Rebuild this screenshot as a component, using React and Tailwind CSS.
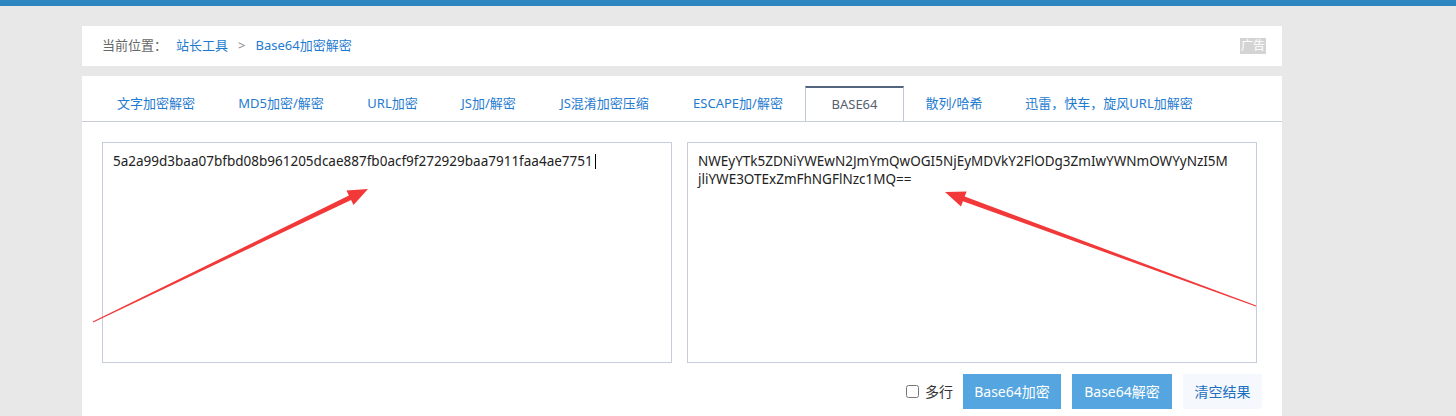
const tabs = [
  { label: "文字加密解密", w: "w-[120px]" },
  { label: "MD5加密/解密", w: "w-[130px]" },
  { label: "URL加密", w: "w-[93px]" },
  { label: "JS加/解密", w: "w-[99px]" },
  { label: "JS混淆加密压缩", w: "w-[133px]" },
  { label: "ESCAPE加/解密", w: "w-[134px]" },
  { label: "BASE64", w: "w-[99px]", active: true },
  { label: "散列/哈希", w: "w-[100px]" },
  { label: "迅雷，快车，旋风URL加解密", w: "w-[210px]" },
]

const source = "5a2a99d3baa07bfbd08b961205dcae887fb0acf9f272929baa7911faa4ae7751"
// wrapped where the reference box wraps it
const encoded = "NWEyYTk5ZDNiYWEwN2JmYmQwOGI5NjEyMDVkY2FlODg3ZmIwYWNmOWYyNzI5M\njliYWE3OTExZmFhNGFlNzc1MQ=="

function Arrows() {
  // red annotation arrows drawn over the screenshot
  return (
    <svg className="absolute left-0 top-0 pointer-events-none" width="1456" height="416">
      <polygon
        fill="#f23838"
        points="92.8,321.6 348.9,195.5 346.5,190.5 368,189 353.5,204.9 351.1,200 93.2,322.4"
      />
      <polygon
        fill="#f23838"
        points="1256.2,305.5 964.7,196.6 966.6,191.4 945,192 961,206.4 962.9,201.2 1255.8,306.5"
      />
    </svg>
  )
}

export default function App() {
  return (
    <div className="relative w-[1456px] h-[416px] overflow-hidden bg-[#e8e8e8] font-['Noto_Sans','Noto_Sans_CJK_SC',sans-serif]">

      <div className="h-[6px] bg-[#2e86c1]" />

      {/* breadcrumb */}
      <div className="ml-[82px] mt-[20px] w-[1200px] h-[40px] bg-white flex items-center pl-[20px] pr-[16px] text-[13px]">
        <span className="text-[#666]">当前位置：</span>
        <a className="ml-[9px] text-[#1f7bd0]">站长工具</a>
        <span className="ml-[10px] text-[#888]">&gt;</span>
        <a className="ml-[10px] text-[#1f7bd0]">Base64加密解密</a>
        <span className="ml-auto bg-[#d4d4d4] text-white text-[12px] leading-[16px] px-[1px]">广告</span>
      </div>

      {/* main card */}
      <div className="ml-[82px] mt-[10px] w-[1200px] h-[400px] bg-white">

        <div className="pt-[10px] pl-[14px] flex border-b border-[#c8ccd4]">
          {tabs.map((t) => (
            <div
              key={t.label}
              className={
                t.active
                  ? `${t.w} h-[35px] -mb-px flex items-center justify-center text-[13px] text-[#56606e] bg-white border-t-2 border-t-[#546580] border-x border-x-[#c0c8d4]`
                  : `${t.w} h-[35px] flex items-center justify-center text-[13px] text-[#1f7bd0]`
              }
            >
              {t.label}
            </div>
          ))}
        </div>

        <div className="pl-[20px] pt-[20px] flex gap-[15px]">
          <div className="w-[570px] h-[221px] border border-[#c6cedd] px-[10px] pt-[9px] text-[13.5px] leading-[18px] text-[#222]">
            {source}
            <span className="inline-block align-[-3px] w-px h-[15px] bg-black ml-[2px]" />
          </div>
          <div className="w-[570px] h-[221px] border border-[#c6cedd] px-[10px] pt-[9px] text-[13.5px] leading-[18px] text-[#222] whitespace-pre-wrap break-all">
            {encoded}
          </div>
        </div>

        <div className="mt-[11px] pr-[20px] flex items-center justify-end text-[14px]">
          <label className="flex items-center gap-[6px] text-[#333] mr-[10px]">
            <input type="checkbox" className="w-[13px] h-[13px]" />
            多行
          </label>
          <button className="w-[98px] h-[35px] bg-[#55a6e0] text-white">Base64加密</button>
          <button className="ml-[11px] w-[100px] h-[35px] bg-[#55a6e0] text-white">Base64解密</button>
          <button className="ml-[11px] w-[79px] h-[35px] bg-[#f5f9fd] text-[#1f6fc0]">清空结果</button>
        </div>

      </div>

      <Arrows />
    </div>
  )
}
